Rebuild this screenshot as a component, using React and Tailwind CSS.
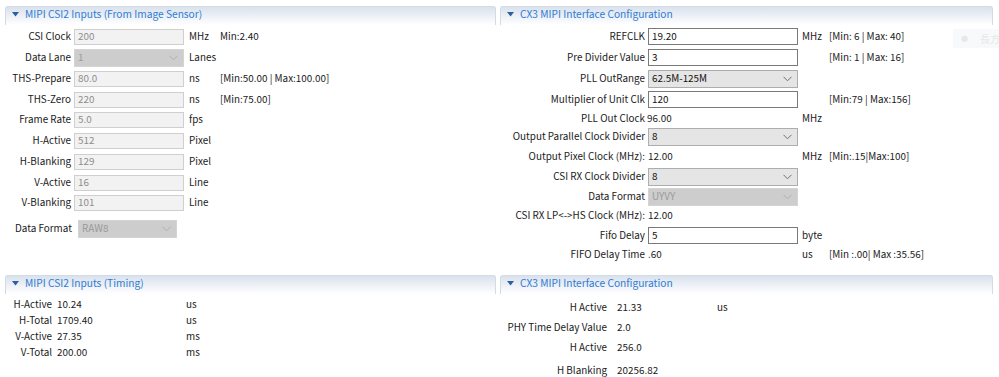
import React from "react";

const Chevron = ({ light }) => (
  <svg width="9" height="6" viewBox="0 0 9 6" className="shrink-0">
    <path d="M0.5 0.8 L4.5 4.8 L8.5 0.8" fill="none" stroke={light ? "#b0b0b0" : "#707070"} strokeWidth="1" />
  </svg>
);

const Header = ({ title }) => (
  <div className="mt-[6px] h-[19px] rounded-t-[3px] border-t border-x border-[#d3dbe5] bg-gradient-to-b from-[#dae2ed] to-white flex items-center pb-[3px] pl-[6px] text-[10.2px] text-[#2f7cd3]">
    <svg width="7" height="5" viewBox="0 0 7 5" className="mr-[6px] shrink-0">
      <path d="M0 0 L7 0 L3.5 4.5 Z" fill="#2c5f9e" />
    </svg>
    <span>{title}</span>
  </div>
);

const DisInput = ({ v, w }) => (
  <div className={`${w} h-[16px] border border-[#cfcfcf] bg-[#f2f2f2] text-[#8d8d8d] flex items-center pl-[3px] shrink-0`}>{v}</div>
);

const Input = ({ v }) => (
  <div className="w-[150px] h-[17px] border border-[#7a7a7a] bg-white text-[#111] flex items-center pl-[3px] shrink-0">{v}</div>
);

const Select = ({ v, w, disabled, h = "h-[18px]" }) => (
  <div
    className={`${w} ${h} border ${disabled ? "border-[#d4d4d4] bg-[#cdcdcd] text-[#9a9a9a]" : "border-[#adadad] bg-[#e5e5e5] text-[#111]"} flex items-center justify-between pl-[3px] pr-[5px] shrink-0`}
  >
    <span>{v}</span>
    <Chevron light={disabled} />
  </div>
);

const LRow = ({ label, children, unit, extra }) => (
  <div className="h-[20.75px] flex items-center">
    <div className="w-[66px] text-right shrink-0 whitespace-nowrap">{label}</div>
    <div className="ml-[3px]">{children}</div>
    <div className="ml-[5px] w-[31px] shrink-0">{unit}</div>
    <div className="whitespace-nowrap">{extra}</div>
  </div>
);

const RRow = ({ label, children, unit, extra, h }) => (
  <div className={`${h} flex items-center`}>
    <div className="w-[145px] text-right shrink-0 whitespace-nowrap">{label}</div>
    <div className="ml-[3px] w-[150px] shrink-0">{children}</div>
    <div className="ml-[4px] w-[27px] shrink-0">{unit}</div>
    <div className="whitespace-nowrap">{extra}</div>
  </div>
);

export default function App() {
  return (
    <div className="w-[999px] h-[377px] bg-white relative overflow-hidden text-[9.9px] text-[#1a1a1a] font-['Noto_Sans_CJK_TC',sans-serif] leading-none">
      <div className="flex h-[269px]">
        {/* Left top */}
        <div className="ml-[5px] w-[491px]">
          <Header title="MIPI CSI2 Inputs (From Image Sensor)" />
          <div className="pt-[2px]">
            <LRow label="CSI Clock" unit="MHz" extra="Min:2.40">
              <DisInput v="200" w="w-[110px]" />
            </LRow>
            <LRow label="Data Lane" unit="Lanes">
              <Select v="1" w="w-[110px]" disabled />
            </LRow>
            <LRow label="THS-Prepare" unit="ns" extra="[Min:50.00 | Max:100.00]">
              <DisInput v="80.0" w="w-[110px]" />
            </LRow>
            <LRow label="THS-Zero" unit="ns" extra="[Min:75.00]">
              <DisInput v="220" w="w-[110px]" />
            </LRow>
            <LRow label="Frame Rate" unit="fps">
              <DisInput v="5.0" w="w-[110px]" />
            </LRow>
            <LRow label="H-Active" unit="Pixel">
              <DisInput v="512" w="w-[110px]" />
            </LRow>
            <LRow label="H-Blanking" unit="Pixel">
              <DisInput v="129" w="w-[110px]" />
            </LRow>
            <LRow label="V-Active" unit="Line">
              <DisInput v="16" w="w-[110px]" />
            </LRow>
            <LRow label="V-Blanking" unit="Line">
              <DisInput v="101" w="w-[110px]" />
            </LRow>
            <div className="mt-[5px] h-[20px] flex items-center">
              <div className="ml-[10px] w-[56px] whitespace-nowrap">Data Format</div>
              <div className="ml-[7px]">
                <Select v="RAW8" w="w-[99px]" disabled />
              </div>
            </div>
          </div>
        </div>

        {/* Right top */}
        <div className="ml-[4px] w-[493px]">
          <Header title="CX3 MIPI Interface Configuration" />
          <div className="pt-[1px]">
            <RRow h="h-[21px]" label="REFCLK" unit="MHz" extra="[Min: 6 | Max: 40]">
              <Input v="19.20" />
            </RRow>
            <RRow h="h-[21px]" label="Pre Divider Value" extra="[Min: 1 | Max: 16]">
              <Input v="3" />
            </RRow>
            <RRow h="h-[21px]" label="PLL OutRange">
              <Select v="62.5M-125M" w="w-[150px]" />
            </RRow>
            <RRow h="h-[21px]" label="Multiplier of Unit Clk" extra="[Min:79 | Max:156]">
              <Input v="120" />
            </RRow>
            <RRow h="h-[18px]" label="PLL Out Clock" unit="MHz">
              <div className="-ml-[1px]">96.00</div>
            </RRow>
            <RRow h="h-[18px]" label="Output Parallel Clock Divider">
              <Select v="8" w="w-[150px]" />
            </RRow>
            <RRow h="h-[21px]" label="Output Pixel Clock (MHz):" unit="MHz" extra="[Min:.15|Max:100]">
              <div>12.00</div>
            </RRow>
            <RRow h="h-[19px]" label="CSI RX Clock Divider">
              <Select v="8" w="w-[150px]" />
            </RRow>
            <RRow h="h-[22px]" label="Data Format">
              <Select v="UYVY" w="w-[150px]" disabled />
            </RRow>
            <RRow h="h-[16px]" label="CSI RX LP<->HS Clock  (MHz):">
              <div>12.00</div>
            </RRow>
            <RRow h="h-[23px]" label="Fifo Delay" unit="byte">
              <Input v="5" />
            </RRow>
            <RRow h="h-[15px]" label="FIFO Delay Time" unit="us" extra="[Min :.00| Max :35.56]">
              <div>.60</div>
            </RRow>
          </div>
        </div>
      </div>

      <div className="flex">
        {/* Left bottom */}
        <div className="ml-[5px] w-[491px]">
          <Header title="MIPI CSI2 Inputs (Timing)" />
          <div className="pt-[3px]">
            {[
              ["H-Active", "10.24", "us"],
              ["H-Total", "1709.40", "us"],
              ["V-Active", "27.35", "ms"],
              ["V-Total", "200.00", "ms"],
            ].map(([l, v, u]) => (
              <div key={l + v} className="h-[16px] flex items-center">
                <div className="w-[47px] text-right shrink-0">{l}</div>
                <div className="ml-[5px] w-[129px] shrink-0">{v}</div>
                <div>{u}</div>
              </div>
            ))}
          </div>
        </div>

        {/* Right bottom */}
        <div className="ml-[4px] w-[493px]">
          <Header title="CX3 MIPI Interface Configuration" />
          <div className="pt-[4px]">
            {[
              ["H Active", "21.33", "us", "h-[20px]"],
              ["PHY Time Delay Value", "2.0", "", "h-[20px]"],
              ["H Active", "256.0", "", "h-[20px]"],
              ["H Blanking", "20256.82", "", "h-[26px]"],
            ].map(([l, v, u, h], i) => (
              <div key={i} className={`${h} flex items-center`}>
                <div className="w-[107px] text-right shrink-0 whitespace-nowrap">{l}</div>
                <div className="ml-[10px] w-[100px] shrink-0">{v}</div>
                <div>{u}</div>
              </div>
            ))}
          </div>
        </div>
      </div>

      <div className="absolute left-[953px] top-[29px] w-[46px] h-[19px] bg-[#f8f9fa] flex items-center pl-[8px] gap-[12px] text-[#e6e8ea] text-[10px] whitespace-nowrap overflow-hidden">
        <span className="text-[7px]">●</span>
        <span>長方</span>
      </div>
    </div>
  );
}
